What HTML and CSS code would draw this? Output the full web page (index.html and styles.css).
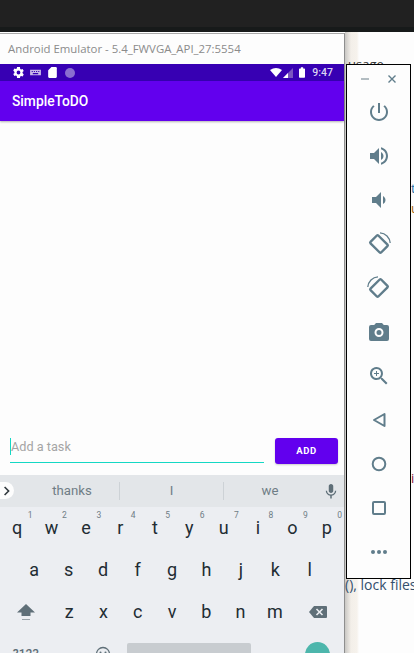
FILE: index.html
```html
<!DOCTYPE html>
<html lang="en">
<head>
    <meta charset="UTF-8">
    <meta name="viewport" content="width=device-width, initial-scale=1.0">
    <title>SimpleToDO</title>
    <link rel="stylesheet" href="styles.css">
</head>
<body>
    <div class="topbar"></div>

    <!-- page behind the emulator -->
    <div class="behind">
        <span class="scrap scrap-usage">usage</span>
        <span class="scrap scrap-t">t</span>
        <span class="scrap scrap-u">u</span>
        <span class="scrap scrap-i">i</span>
        <span class="scrap scrap-lock">(), lock files</span>
    </div>

    <div class="emulator">
        <div class="titlebar">Android Emulator - 5.4_FWVGA_API_27:5554</div>

        <div class="statusbar">
            <div class="status-left">
                <svg class="status-icon" viewBox="0 0 24 24"><path fill="#fff" fill-rule="evenodd" d="M19.400 13c.04-.32.1-.65.1-1s-.06-.68-.1-1l2.300-1.700-2.200-3.800-2.600 1.100c-.55-.42-1.130-.77-1.770-1.030L14.700 2h-5.400l-.43 2.570c-.64.26-1.220.61-1.770 1.030L4.500 4.500 2.300 8.300 4.600 11c-.04.32-.1.650-.1 1s.06.68.1 1l-2.300 1.700 2.200 3.800 2.600-1.100c.55.42 1.130.77 1.770 1.030L9.300 22h5.400l.43-2.570c.64-.26 1.220-.61 1.770-1.030l2.600 1.100 2.200-3.800zM12 15.500a3.500 3.500 0 1 1 0-7 3.500 3.500 0 0 1 0 7z"/></svg>
                <svg class="status-icon" viewBox="0 0 24 24"><path fill="#c9b8e8" fill-rule="evenodd" d="M2 7h20v10H2zM5 9v2h2V9zm4 0v2h2V9zm4 0v2h2V9zm4 0v2h2V9zM7 13v2h10v-2z"/></svg>
                <svg class="status-icon" viewBox="0 0 24 24"><path fill="#fff" d="M10 2h8a2 2 0 0 1 2 2v16a2 2 0 0 1-2 2H6a2 2 0 0 1-2-2V8z"/></svg>
                <span class="status-dot"></span>
            </div>
            <div class="status-right">
                <svg class="wifi" viewBox="0 0 16 12"><path fill="#fff" d="M0 2.500Q8-2.500 16 2.500L8 12z"/></svg>
                <svg class="signal" viewBox="0 0 12 12"><path fill="#7a55c0" d="M12 0v12H0z"/><path fill="#fff" d="M6 6v6H0z"/></svg>
                <svg class="battery" viewBox="0 0 8 14"><path fill="#fff" d="M2.500 0h3v1.500H7a1 1 0 0 1 1 1V13a1 1 0 0 1-1 1H1a1 1 0 0 1-1-1V2.500a1 1 0 0 1 1-1h1.500z"/></svg>
                <span class="clock">9:47</span>
            </div>
        </div>

        <div class="appbar">SimpleToDO</div>

        <div class="content">
            <div class="task-row">
                <div class="task-input"><span class="caret"></span>Add a task</div>
                <div class="add-btn">ADD</div>
            </div>
        </div>

        <div class="keyboard">
            <div class="suggestions">
                <span class="sugg-arrow">
                    <svg viewBox="0 0 10 12" width="8" height="10"><path fill="none" stroke="#30383d" stroke-width="2" d="M2 1l5 5-5 5"/></svg>
                </span>
                <span class="sugg sugg-first">thanks</span>
                <span class="sugg">I</span>
                <span class="sugg sugg-last">we</span>
                <svg class="mic" viewBox="0 0 24 24"><path fill="#5f6f78" d="M12 14.500c1.800 0 3-1.300 3-3v-6c0-1.700-1.200-3-3-3s-3 1.300-3 3v6c0 1.700 1.200 3 3 3zm5.300-3c0 3-2.500 5.100-5.300 5.100s-5.300-2.100-5.300-5.100H5c0 3.400 2.700 6.200 6 6.700V22h2v-3.800c3.300-.5 6-3.300 6-6.700z"/></svg>
            </div>

            <div class="key-row">
                <span class="key"><sup>1</sup>q</span>
                <span class="key"><sup>2</sup>w</span>
                <span class="key"><sup>3</sup>e</span>
                <span class="key"><sup>4</sup>r</span>
                <span class="key"><sup>5</sup>t</span>
                <span class="key"><sup>6</sup>y</span>
                <span class="key"><sup>7</sup>u</span>
                <span class="key"><sup>8</sup>i</span>
                <span class="key"><sup>9</sup>o</span>
                <span class="key"><sup>0</sup>p</span>
            </div>
            <div class="key-row key-row-inset">
                <span class="key">a</span>
                <span class="key">s</span>
                <span class="key">d</span>
                <span class="key">f</span>
                <span class="key">g</span>
                <span class="key">h</span>
                <span class="key">j</span>
                <span class="key">k</span>
                <span class="key">l</span>
            </div>
            <div class="key-row">
                <span class="key key-wide">
                    <svg viewBox="0 0 18 18" width="18" height="18"><path fill="#5f6f78" d="M9 1l9 8.500h-4.500V13h-9V9.500H0z"/><path fill="#9aa3a9" d="M5 16h8v1H5z"/></svg>
                </span>
                <span class="key">z</span>
                <span class="key">x</span>
                <span class="key">c</span>
                <span class="key">v</span>
                <span class="key">b</span>
                <span class="key">n</span>
                <span class="key">m</span>
                <span class="key key-wide">
                    <svg viewBox="0 0 18 14" width="18" height="14"><path fill="#5f6f78" d="M5 1h12a1 1 0 0 1 1 1v10a1 1 0 0 1-1 1H5L0 7z"/><path stroke="#eceef2" stroke-width="1.600" d="M7.500 4l6 6m0-6l-6 6"/></svg>
                </span>
            </div>
            <div class="key-row key-row-bottom">
                <span class="key-sym">?123</span>
                <svg class="emoji" viewBox="0 0 16 16"><circle cx="8" cy="8" r="6.500" fill="none" stroke="#5f6f78" stroke-width="1.300"/><circle cx="5.500" cy="6.500" r="1" fill="#5f6f78"/><circle cx="10.500" cy="6.500" r="1" fill="#5f6f78"/></svg>
                <span class="spacebar"></span>
                <span class="enter-key"></span>
            </div>
        </div>
    </div>

    <div class="sidepanel">
        <div class="window-controls">
            <svg viewBox="0 0 10 10" width="10" height="10"><path stroke="#9aa7ae" stroke-width="1.500" d="M1 5h8"/></svg>
            <svg viewBox="0 0 10 10" width="10" height="10"><path stroke="#607d8b" stroke-width="1.400" d="M1.500 1.500l7 7m0-7l-7 7"/></svg>
        </div>
        <div class="tools">
            <svg class="tool" viewBox="0 0 24 24"><path d="M13 3h-2v10h2V3zm4.830 2.170l-1.420 1.420C17.990 7.860 19 9.810 19 12c0 3.870-3.130 7-7 7s-7-3.130-7-7c0-2.190 1.010-4.140 2.580-5.420L6.170 5.170C4.230 6.820 3 9.260 3 12c0 4.970 4.030 9 9 9s9-4.030 9-9c0-2.740-1.230-5.180-3.170-6.830z"/></svg>
            <svg class="tool" viewBox="0 0 24 24"><path d="M3 9v6h4l5 5V4L7 9H3zm13.500 3c0-1.770-1.020-3.290-2.500-4.030v8.050c1.480-.73 2.500-2.250 2.500-4.020zM14 3.230v2.060c2.890.86 5 3.540 5 6.710s-2.110 5.850-5 6.710v2.060c4.010-.91 7-4.490 7-8.770s-2.990-7.860-7-8.770z"/></svg>
            <svg class="tool" viewBox="0 0 24 24"><path d="M18.500 12c0-1.770-1.020-3.290-2.500-4.030v8.050c1.480-.73 2.500-2.250 2.500-4.020zM5 9v6h4l5 5V4L9 9H5z"/></svg>
            <svg class="tool" viewBox="0 0 24 24"><g fill="none" stroke="#607d8b"><rect x="4.500" y="6.500" width="15" height="11" rx="1" stroke-width="2.400" transform="rotate(45 12 12)"/><path stroke-width="1.300" d="M13 .8c5.500.3 9.800 4.700 10.200 10.200"/></g></svg>
            <svg class="tool" viewBox="0 0 24 24"><g fill="none" stroke="#607d8b"><rect x="4.500" y="6.500" width="15" height="11" rx="1" stroke-width="2.400" transform="rotate(-45 12 12)"/><path stroke-width="1.300" d="M.8 11C1.200 5.500 5.500 1.100 11 .8"/></g></svg>
            <svg class="tool" viewBox="0 0 24 24"><path fill-rule="evenodd" d="M9 3L7.200 5H4a2 2 0 0 0-2 2v12a2 2 0 0 0 2 2h16a2 2 0 0 0 2-2V7a2 2 0 0 0-2-2h-3.200L15 3H9zm3 14a4.500 4.500 0 1 1 0-9 4.500 4.500 0 0 1 0 9zm0-2a2.500 2.500 0 1 0 0-5 2.500 2.500 0 0 0 0 5z"/></svg>
            <svg class="tool" viewBox="0 0 24 24"><path d="M15.500 14h-.8l-.3-.3A6.500 6.500 0 1 0 13.700 14.400l.3.3v.8l5 5 1.500-1.500-5-5zm-6 0a4.500 4.500 0 1 1 0-9 4.500 4.500 0 0 1 0 9zM12 10h-2v2H9v-2H7V9h2V7h1v2h2v1z"/></svg>
            <svg class="tool" viewBox="0 0 24 24"><path fill="none" stroke="#607d8b" stroke-width="2" stroke-linejoin="round" d="M17.500 6v12L7 12z"/></svg>
            <svg class="tool" viewBox="0 0 24 24"><circle cx="12" cy="12" r="6.300" fill="none" stroke="#607d8b" stroke-width="2"/></svg>
            <svg class="tool" viewBox="0 0 24 24"><rect x="6" y="6" width="12" height="12" rx="1" fill="none" stroke="#607d8b" stroke-width="2"/></svg>
            <svg class="tool" viewBox="0 0 24 24"><circle cx="6" cy="12" r="2"/><circle cx="12" cy="12" r="2"/><circle cx="18" cy="12" r="2"/></svg>
        </div>
    </div>
</body>
</html>
```

FILE: styles.css
```css
html, body {
    margin: 0;
    padding: 0;
    height: 653px;
    overflow: hidden;
    background-color: #fdfdfd;
    font-family: Roboto, sans-serif;
}

.topbar {
    height: 27px;
    background-color: #212121;
    border-bottom: 5px solid #171a1a;
}

/* scraps of the page behind */
.behind {
    position: absolute;
    top: 32px;
    left: 345px;
    right: 0;
    bottom: 0;
    overflow: hidden;
    background: linear-gradient(90deg, #c9c7c4 0, #f3efe9 6px, #f6f2ec 12px, #fdfdfd 14px);
    font-family: "Open Sans", sans-serif;
    font-size: 13px;
    color: #2f5f8f;
}

.scrap {
    position: absolute;
    white-space: nowrap;
}

.scrap-usage { left: 3px; top: 23px; color: #333; }
.scrap-t { left: 66px; top: 147px; color: #1f6fa8; }
.scrap-u { left: 66px; top: 167px; color: #a8650f; }
.scrap-i { left: 66px; top: 437px; color: #8a1040; }
.scrap-lock { left: 0; top: 543px; font-size: 14px; color: #34506e; }

.emulator {
    position: absolute;
    top: 33px;
    left: 0;
    width: 345px;
    height: 620px;
    display: flex;
    flex-direction: column;
    background-color: #fdfdfd;
    border-top: 1px solid #a9a9a9;
    border-right: 1px solid #8e8e8e;
    box-sizing: border-box;
}

.titlebar {
    height: 30px;
    padding-left: 8px;
    line-height: 30px;
    font-family: "Open Sans", sans-serif;
    font-size: 11.4px;
    color: #8b8b8b;
    white-space: nowrap;
}

.statusbar {
    height: 17px;
    display: flex;
    justify-content: space-between;
    align-items: center;
    padding: 0 11px 0 12px;
    background-color: #3700b3;
}

.status-left, .status-right {
    display: flex;
    align-items: center;
}

.status-left { gap: 4px; }

.status-icon {
    width: 13px;
    height: 13px;
}

.status-dot {
    width: 10px;
    height: 10px;
    margin-left: 2px;
    border-radius: 50%;
    background-color: #8a6fd0;
}

.wifi {
    width: 12px;
    height: 9px;
}

.signal {
    width: 10px;
    height: 10px;
    margin-left: 1px;
}

.battery {
    width: 6px;
    height: 11px;
    margin: 0 0 1px 6px;
}

.clock {
    margin-left: 7px;
    font-size: 10.5px;
    font-weight: 500;
    color: #dcd3f2;
}

.appbar {
    height: 40px;
    padding-left: 12px;
    line-height: 40px;
    font-size: 13.8px;
    font-weight: 500;
    color: #fff;
    background-color: #6200ee;
    box-shadow: 0 1px 2px rgba(0, 0, 0, 0.3);
}

.content {
    flex: 1;
    display: flex;
    flex-direction: column;
    justify-content: flex-end;
    padding: 0 6px 11px 10px;
}

.task-row {
    display: flex;
    align-items: flex-start;
    justify-content: space-between;
}

.task-input {
    width: 254px;
    height: 25px;
    box-sizing: border-box;
    padding-bottom: 7px;
    display: flex;
    align-items: center;
    border-bottom: 1px solid #14d8c4;
    font-size: 12.7px;
    color: #a5a5a5;
}

.caret {
    width: 1px;
    height: 17px;
    background-color: #14d8c4;
}

.add-btn {
    width: 63px;
    height: 26px;
    line-height: 26px;
    border-radius: 3px;
    text-align: center;
    font-size: 9.5px;
    font-weight: 700;
    letter-spacing: 0.6px;
    color: #fff;
    background-color: #6200ee;
    box-shadow: 0 1px 2px rgba(0, 0, 0, 0.2);
}

.keyboard {
    height: 178px;
    background-color: #eceef2;
    overflow: hidden;
}

.suggestions {
    height: 32px;
    display: flex;
    align-items: center;
    background-color: #e3e6e9;
    position: relative;
}

.sugg-arrow {
    position: absolute;
    left: 0;
    top: 7px;
    width: 14px;
    height: 17px;
    display: flex;
    align-items: center;
    justify-content: center;
    border-radius: 0 9px 9px 0;
    background-color: #fdfdfd;
}

.sugg {
    width: 104px;
    box-sizing: border-box;
    text-align: center;
    font-size: 13.2px;
    color: #6f7d86;
    border-left: 1px solid #cdd2d6;
    line-height: 18px;
}

.sugg-first {
    width: 119px;
    padding-left: 25px;
    border-left: 0;
}

.sugg-last {
    width: 93px;
}

.mic {
    width: 18px;
    height: 18px;
    margin-left: 6px;
}

.key-row {
    height: 42px;
    display: flex;
    align-items: center;
}

.key-row-inset { padding: 0 17px; }

.key {
    flex: 1;
    position: relative;
    text-align: center;
    font-size: 18px;
    line-height: 24px;
    color: #222c33;
}

.key sup {
    position: absolute;
    top: -6px;
    right: 2px;
    font-size: 8.5px;
    line-height: 10px;
    color: #6f7d86;
}

.key-wide {
    flex: 0 0 52px;
    display: flex;
    align-items: center;
    justify-content: center;
}

.key-sym {
    width: 52px;
    text-align: center;
    font-size: 12px;
    font-weight: 500;
    color: #5f6f78;
}

.emoji {
    width: 16px;
    height: 16px;
    margin-left: 43px;
}

.spacebar {
    width: 124px;
    height: 30px;
    align-self: flex-start;
    margin: 10px 0 0 16px;
    border-radius: 2px;
    background-color: #c8ccd0;
}

.enter-key {
    width: 25px;
    height: 25px;
    margin-left: 54px;
    border-radius: 50%;
    background-color: #4db6ac;
}

.sidepanel {
    position: absolute;
    top: 64px;
    left: 346px;
    width: 63px;
    height: 513px;
    border: 1px solid #000;
    background-color: #fdfdfd;
    display: flex;
    flex-direction: column;
    align-items: center;
}

.window-controls {
    width: 100%;
    height: 27px;
    display: flex;
    align-items: center;
    justify-content: center;
    gap: 17px;
}

.tools {
    display: flex;
    flex-direction: column;
    align-items: center;
    gap: 20px;
    padding-top: 8px;
}

.tool {
    width: 24px;
    height: 24px;
    fill: #607d8b;
    overflow: visible;
}
```
